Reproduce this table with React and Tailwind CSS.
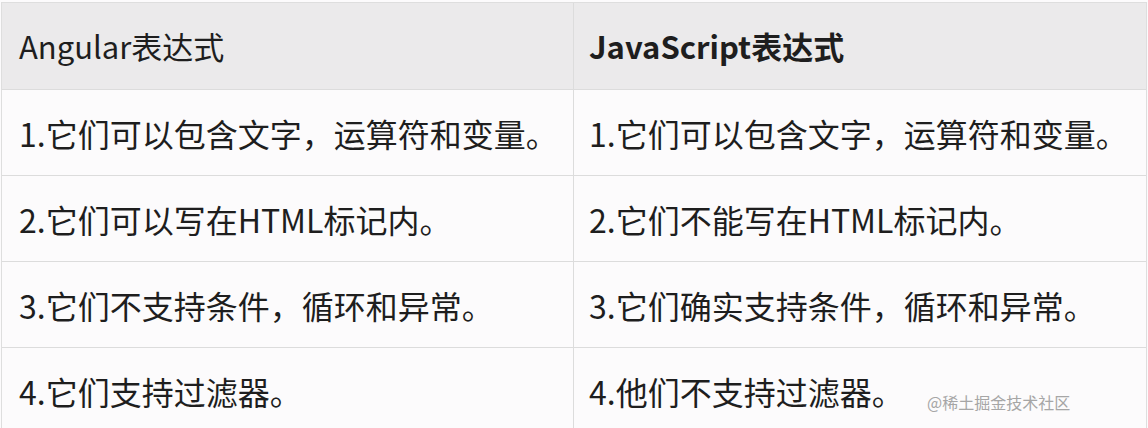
export default function App() {
  const font = { fontFamily: '"Noto Sans CJK SC", "Noto Sans", sans-serif' };
  const rows = [
    ["1.它们可以包含文字，运算符和变量。", "1.它们可以包含文字，运算符和变量。"],
    ["2.它们可以写在HTML标记内。", "2.它们不能写在HTML标记内。"],
    ["3.它们不支持条件，循环和异常。", "3.它们确实支持条件，循环和异常。"],
    ["4.它们支持过滤器。", "4.他们不支持过滤器。"],
  ];
  return (
    <div className="relative w-[1148px] h-[428px] overflow-hidden bg-[#fcfbfc] pt-[2px]" style={font}>
      <div className="ml-[1px] w-[1146px] border-t border-l border-r border-[#dedede] text-[#1e1e1e]">
        <div className="flex h-[87px] border-b border-[#dcdcdc] bg-[#ebeaeb]">
          <div className="w-[572px] border-r border-[#dcdcdc] flex items-center pl-[17px] text-[31px]">
            Angular表达式
          </div>
          <div className="flex-1 flex items-center pl-[15px] text-[31px] font-bold">
            JavaScript表达式
          </div>
        </div>
        {rows.map((r, i) => (
          <div key={i} className="flex h-[86px] border-b border-[#dcdcdc]">
            <div className="w-[572px] border-r border-[#dcdcdc] flex items-center pl-[17px] text-[32px]">
              {r[0]}
            </div>
            <div className="flex-1 flex items-center pl-[15px] text-[32px]">
              {r[1]}
            </div>
          </div>
        ))}
      </div>
      <div className="absolute left-[927px] top-[390px] text-[16px] text-[#a6a6a6]">
        @稀土掘金技术社区
      </div>
    </div>
  );
}
